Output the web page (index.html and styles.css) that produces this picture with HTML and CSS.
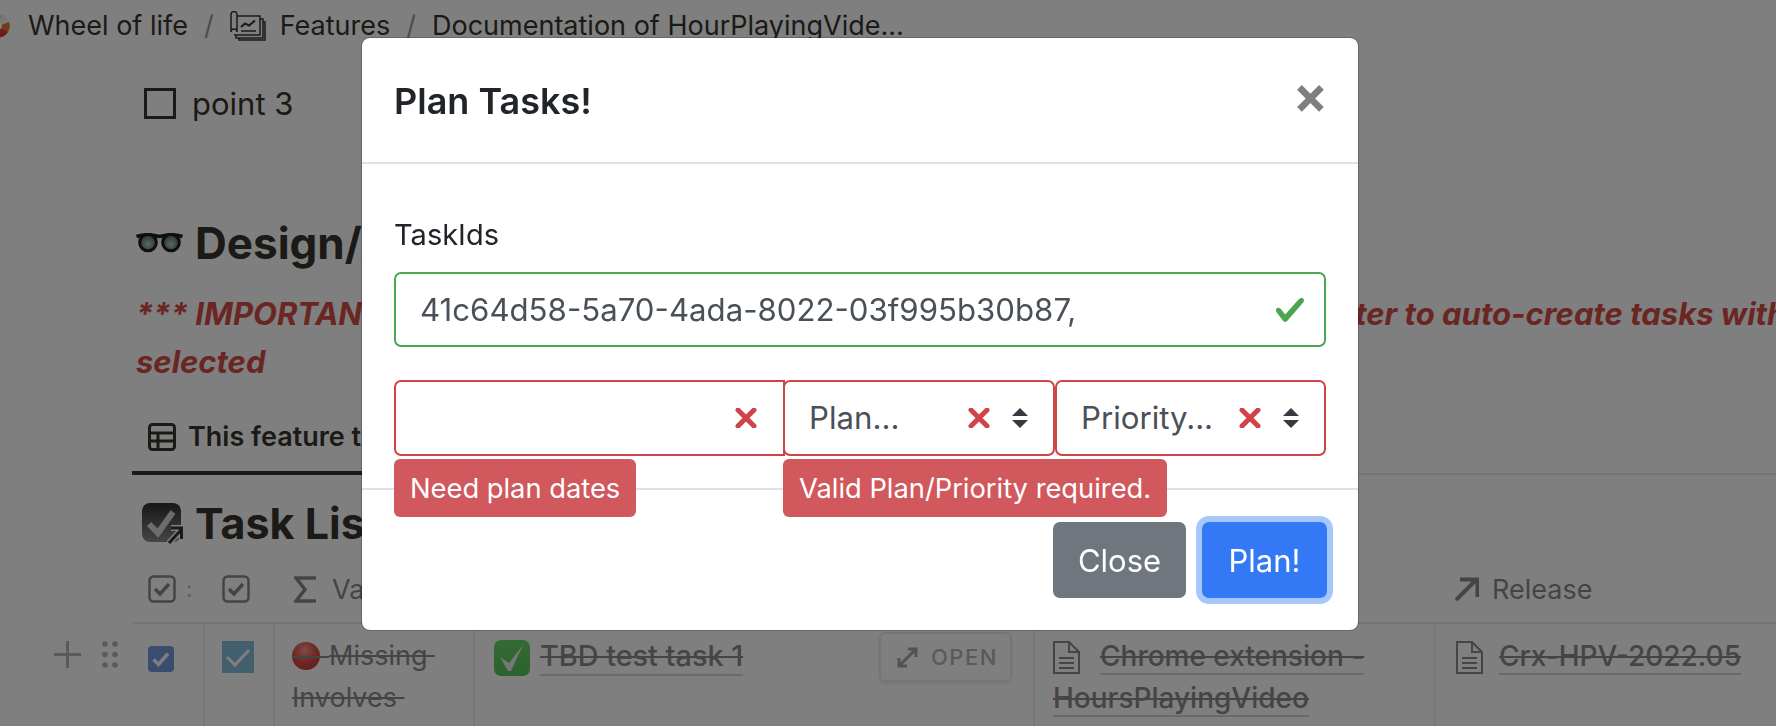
FILE: index.html
```html
<!DOCTYPE html>
<html lang="en">
<head>
<meta charset="utf-8">
<title>Plan Tasks</title>
<link rel="stylesheet" href="styles.css">
</head>
<body>
<div class="page">
  <nav class="crumbs">
    <svg class="logo" viewBox="0 0 24 24"><circle cx="12" cy="12" r="11.500" fill="#d8d8d8"/><path d="M12 12 L23 8 A11.500 11.500 0 0 1 22 18Z" fill="#e8772e"/><path d="M12 12 L22 18 A11.500 11.500 0 0 1 14 23.500Z" fill="#d93a32"/><path d="M12 12 L14 23.500 A11.500 11.500 0 0 1 4 20Z" fill="#3d7cc9"/><path d="M12 12 L23 8 A11.500 11.500 0 0 0 16 1Z" fill="#f1f1f1"/><circle cx="12" cy="12" r="4" fill="#fff"/></svg>
    <span class="crumb">Wheel of life</span>
    <span class="sep">/</span>
    <svg class="feat" viewBox="0 0 36 30" fill="none" stroke="#37352f" stroke-width="1.500"><path d="M1 3.500a3 3 0 0 1 6 0V21a3 3 0 0 0-6 0z"/><path d="M7 5h23v19H4"/><path d="M30 8h3v19H6v-3M33 11h2v18H9v-2"/><path d="M11 16l4-3.500 4 2 6-5" stroke-width="2.200"/><path d="M11 20h15" stroke-width="1.500"/></svg>
    <span class="crumb">Features</span>
    <span class="sep">/</span>
    <span class="crumb">Documentation of HourPlayingVide...</span>
  </nav>

  <div class="todo"><span class="box"></span><span>point 3</span></div>

  <h2 class="heading">
    <svg class="glasses" viewBox="0 0 47 20"><defs><radialGradient id="lens" cx=".5" cy=".6" r=".6"><stop offset="0" stop-color="#b0d0c8"/><stop offset=".7" stop-color="#6a8680"/><stop offset="1" stop-color="#2a3838"/></radialGradient></defs><path d="M0.500 3.500C8 1 16 1.500 23.500 3.500C31 1.500 39 1 46.500 3.500" stroke="#1c1c1c" stroke-width="3.500" fill="none"/><circle cx="12" cy="9.500" r="8.300" fill="url(#lens)" stroke="#1c1c1c" stroke-width="3"/><circle cx="35" cy="9.500" r="8.300" fill="url(#lens)" stroke="#1c1c1c" stroke-width="3"/></svg>
    <span>Design/Architecture</span>
  </h2>

  <div class="note">
    <div class="note-line"><span class="note-left">*** IMPORTANT: after selecting</span><span>filter to auto-create tasks with</span></div>
    <div>selected</div>
  </div>

  <div class="tabs">
    <div class="tab">
      <svg class="tab-icon" viewBox="0 0 28 28" fill="none" stroke="#37352f" stroke-width="3"><rect x="1.500" y="1.500" width="25" height="25" rx="3"/><path d="M1.500 10h25M1.500 18h25M10 10v17"/></svg>
      <span>This feature tasks and more</span>
    </div>
  </div>

  <h2 class="tasklist">
    <svg class="tl-icon" viewBox="0 0 42 41"><defs><linearGradient id="tlg" x1="0" y1="0" x2="0" y2="1"><stop offset="0" stop-color="#2f2f2f"/><stop offset="1" stop-color="#8a8a8a"/></linearGradient></defs><rect width="39" height="39" rx="8" fill="url(#tlg)"/><path d="M7 21l9 9L31 9" fill="none" stroke="#d9d9d9" stroke-width="6"/><path d="M27 40L39 27M29 25h10.500v11" fill="none" stroke="#fff" stroke-width="6"/><path d="M27 40L39 27M29 25h10.500v11" fill="none" stroke="#37352f" stroke-width="3"/></svg>
    <span>Task List for this</span>
  </h2>

  <div class="table">
    <div class="thead">
      <div class="th th-first"><svg class="th-icon" viewBox="0 0 28 28" fill="none" stroke="#8a8985" stroke-width="2.500"><rect x="1.500" y="1.500" width="25" height="25" rx="4"/><path d="M7 14l5 5 9-10" stroke-width="3.500"/></svg><span class="clip">:</span></div>
      <div class="th"><svg class="th-icon" viewBox="0 0 28 28" fill="none" stroke="#8a8985" stroke-width="2.500"><rect x="1.500" y="1.500" width="25" height="25" rx="4"/><path d="M7 14l5 5 9-10" stroke-width="3.500"/></svg></div>
      <div class="th th-val"><svg class="sigma" viewBox="0 0 22 27" fill="none" stroke="#8a8985" stroke-width="3.500"><path d="M22 2H2l9 11.500L2 25h20"/></svg><span>Value</span></div>
      <div class="th"></div>
      <div class="th"></div>
      <div class="th th-rel"><svg class="arrow" viewBox="0 0 24 24" fill="none" stroke="#8a8985" stroke-width="4"><path d="M1 23L22 2M5 2.500h17.500V20"/></svg><span>Release</span></div>
    </div>
    <div class="tr">
      <div class="handles">
        <svg class="plus" viewBox="0 0 27 27" stroke="#b5b4b1" stroke-width="3"><path d="M13.500 0v27M0 13.500h27"/></svg>
        <svg class="dots" viewBox="0 0 16 27" fill="#b5b4b1"><circle cx="3" cy="3" r="2.800"/><circle cx="13" cy="3" r="2.800"/><circle cx="3" cy="13.500" r="2.800"/><circle cx="13" cy="13.500" r="2.800"/><circle cx="3" cy="24" r="2.800"/><circle cx="13" cy="24" r="2.800"/></svg>
      </div>
      <div class="td td-check1"><svg class="cb-blue" viewBox="0 0 26 26"><rect width="26" height="26" rx="4" fill="#7598e0"/><path d="M5.500 13.500l5 5L20 7.500" fill="none" stroke="#fff" stroke-width="3.500"/></svg></div>
      <div class="td td-check2"><svg class="cb-teal" viewBox="0 0 32 32"><rect width="32" height="32" fill="#87bedd"/><path d="M5 16l8 8L27 9" fill="none" stroke="#fff" stroke-width="3"/></svg></div>
      <div class="td td-val"><svg class="red" viewBox="0 0 37 28"><defs><radialGradient id="rd" cx=".45" cy=".3" r=".8"><stop offset="0" stop-color="#f59a95"/><stop offset=".5" stop-color="#e2504a"/><stop offset="1" stop-color="#c43a35"/></radialGradient></defs><circle cx="14" cy="14" r="14" fill="url(#rd)"/><path d="M0 15h37" stroke="#8a8a8a" stroke-width="2"/></svg><span class="strike">Missing&nbsp;</span> <span class="strike">Involves&nbsp;</span></div>
      <div class="td td-name">
        <svg class="green" viewBox="0 0 36 36"><defs><linearGradient id="gr" x1="0" y1="0" x2="0" y2="1"><stop offset="0" stop-color="#6ad468"/><stop offset="1" stop-color="#58c45a"/></linearGradient></defs><rect width="36" height="36" rx="7" fill="url(#gr)"/><path d="M6 17l9 6L29 5 17 31h-3z" fill="#eee"/></svg>
        <span class="link strike">TBD test task 1</span>
        <span class="open"><svg class="open-icon" viewBox="0 0 21 21" fill="none" stroke="#a5a4a0" stroke-width="3"><path d="M2 19L19 2M11 2h8v8M2 11v8h8"/></svg>OPEN</span>
      </div>
      <div class="td td-feat"><svg class="file" viewBox="0 0 27 33" fill="none" stroke="#8a8a8a" stroke-width="2"><path d="M1 1h15l10 10v21H1zM16 1v10h10M6 17h15M6 22h15M6 27h15"/></svg><span class="link strike">Chrome extension - HoursPlayingVideo</span></div>
      <div class="td td-rel"><svg class="file" viewBox="0 0 27 33" fill="none" stroke="#8a8a8a" stroke-width="2"><path d="M1 1h15l10 10v21H1zM16 1v10h10M6 17h15M6 22h15M6 27h15"/></svg><span class="link strike">Crx-HPV-2022.05</span></div>
    </div>
  </div>
</div>

<div class="backdrop">
  <div class="modal">
    <header class="m-head">
      <h5 class="m-title">Plan Tasks!</h5>
      <span class="m-close">×</span>
    </header>
    <div class="m-body">
      <div class="m-label">TaskIds</div>
      <div class="field valid">
        <span class="val-text">41c64d58-5a70-4ada-8022-03f995b30b87,</span>
        <svg class="ok" viewBox="0 0 8 8"><path fill="#4ba64f" d="M2.300 6.730L.6 4.530c-.4-1.040.46-1.400 1.100-.8l1.100 1.400 3.400-3.800c.6-.63 1.600-.27 1.200.7l-4 4.600c-.43.5-.8.4-1.100.1z"/></svg>
      </div>
      <div class="f-row">
        <div class="group g-date">
          <div class="field invalid square-right">
            <svg class="bad" viewBox="0 0 22 20"><path d="M3 2l16 16M19 2L3 18" stroke="#cf4349" stroke-width="5" stroke-linecap="round"/></svg>
          </div>
          <div class="tip">Need plan dates</div>
        </div>
        <div class="group g-plan">
          <div class="field invalid">
            <span class="val-text">Plan...</span>
            <svg class="bad" viewBox="0 0 22 20"><path d="M3 2l16 16M19 2L3 18" stroke="#cf4349" stroke-width="5" stroke-linecap="round"/></svg>
            <svg class="updown" viewBox="0 0 4 5"><path fill="#343a40" d="M2 0L0 2h4zm0 5L0 3h4z"/></svg>
          </div>
          <div class="tip">Valid Plan/Priority required.</div>
        </div>
        <div class="group g-prio">
          <div class="field invalid">
            <span class="val-text">Priority...</span>
            <svg class="bad" viewBox="0 0 22 20"><path d="M3 2l16 16M19 2L3 18" stroke="#cf4349" stroke-width="5" stroke-linecap="round"/></svg>
            <svg class="updown" viewBox="0 0 4 5"><path fill="#343a40" d="M2 0L0 2h4zm0 5L0 3h4z"/></svg>
          </div>
        </div>
      </div>
    </div>
    <footer class="m-foot">
      <button class="btn btn-close">Close</button>
      <button class="btn btn-plan">Plan!</button>
    </footer>
  </div>
</div>
</body>
</html>
```
FILE: styles.css
```css
* { box-sizing: border-box; }
html, body { margin: 0; padding: 0; height: 100%; overflow: hidden; background: #fff; }
body { font-family: Inter, "Noto Sans", sans-serif; color: #37352f; }
svg { display: block; flex: none; }

.page { width: 1776px; height: 726px; overflow: hidden; position: relative; font-size: 25px; }

/* breadcrumb */
.crumbs { height: 51px; display: flex; align-items: center; white-space: nowrap; font-size: 27px; }
.logo { width: 24px; height: 24px; margin-left: -14px; margin-right: 18px; }
.sep { margin: 0 16px; color: #9b9a97; }
.feat { width: 36px; height: 30px; margin-right: 14px; }

.todo { margin: 37px 0 0 144px; height: 31px; display: flex; align-items: center; gap: 16px; font-size: 31px; }
.box { width: 32px; height: 31px; border: 3px solid #37352f; }

.heading, .tasklist { display: flex; align-items: center; margin: 0; font-weight: 700; white-space: nowrap; }
.heading { margin: 100px 0 0 136px; height: 48px; gap: 12px; font-size: 44px; }
.glasses { width: 47px; height: 20px; }

.note { margin: 23px 0 0 136px; font-size: 31px; line-height: 48px; font-weight: 700; font-style: italic; color: #d44c47; white-space: nowrap; }
.note-line { display: flex; }
.note-left { width: 1189px; flex: none; overflow: hidden; }

.tabs { margin: 19px 0 0 132px; height: 70px; border-bottom: 2px solid #e9e9e7; }
.tab { width: 300px; height: 70px; padding: 0 0 3px 16px; display: flex; align-items: center; gap: 12px; font-weight: 600; font-size: 27px; white-space: nowrap; border-bottom: 4px solid #37352f; }
.tab-icon { width: 28px; height: 28px; }

.tasklist { margin: 28px 0 0 142px; height: 40px; gap: 11px; font-size: 43px; }
.tl-icon { width: 42px; height: 41px; }

/* table */
.table { margin: 13px 0 0 132px; position: relative; }
.thead, .tr { display: grid; grid-template-columns: 73px 70px 200px 560px 401px 1fr; }
.thead { height: 68px; border-bottom: 2px solid #e9e9e7; }
.th { display: flex; align-items: center; padding-left: 16px; gap: 13px; color: #8a8985; font-size: 27px; white-space: nowrap; overflow: hidden; }
.th:nth-child(2) { padding-left: 17px; }
.th-first { gap: 10px; }
.clip { color: #bdbcb9; font-size: 22px; }
.th-val { padding-left: 19px; gap: 16px; }
.th-rel { padding-left: 19px; gap: 13px; }
.th-icon { width: 28px; height: 28px; }
.sigma { width: 22px; height: 27px; }
.arrow { width: 24px; height: 24px; }
.tr { position: relative; height: 120px; }
.td { border-right: 2px solid #f0f0ee; padding-top: 11px; font-size: 28px; line-height: 42px; font-weight: 500; position: relative; color: #8a8a8a; }
.td:last-child { border-right: 0; }
.handles { position: absolute; left: -78px; top: 17px; display: flex; gap: 21px; }
.plus { width: 27px; height: 27px; }
.dots { width: 16px; height: 27px; }
.td-check1 { padding: 22px 0 0 16px; }
.cb-blue { width: 26px; height: 26px; }
.td-check2 { padding: 17px 0 0 17px; }
.cb-teal { width: 32px; height: 32px; }
.td-val { padding-left: 17px; font-weight: 400; font-size: 27px; }
.red { display: inline-block; width: 37px; height: 28px; vertical-align: -5px; }
.strike { text-decoration: line-through; text-decoration-thickness: 2px; }
.td-name { display: flex; align-items: flex-start; padding-left: 19px; gap: 10px; }
.green { width: 36px; height: 36px; margin-top: 5px; }
.td-feat { padding-left: 18px; }
.td-rel { padding-left: 20px; }
.file { display: inline-block; width: 27px; height: 33px; vertical-align: -8px; margin-right: 20px; }
.td-rel .file { margin-right: 16px; }
.link { border-bottom: 2px solid #d4d4d4; font-weight: 500; }
.td-name .link { font-size: 28.800px; line-height: 36px; margin-top: 3px; }
.open { position: absolute; right: 21px; top: 8px; height: 50px; width: 133px; padding-left: 16px; display: flex; align-items: center; gap: 13px; border: 2px solid #ecebe9; border-radius: 6px; box-shadow: 0 2px 3px rgba(15, 15, 15, .08); color: #b5b4b1; font-size: 22px; font-weight: 500; letter-spacing: 1.500px; }
.open-icon { width: 21px; height: 21px; }

/* modal overlay */
.backdrop { position: fixed; inset: 0; background: rgba(0, 0, 0, .5); padding: 37px 0 0 361px; }
.modal { width: 998px; height: 594px; background: #fff; border: 1px solid rgba(0, 0, 0, .2); border-radius: 9px; background-clip: padding-box; display: flex; flex-direction: column; color: #212529; }
.m-head { height: 126px; flex: none; display: flex; align-items: center; justify-content: space-between; padding: 2px 30px 0 32px; border-bottom: 2px solid #dee2e6; }
.m-title { margin: 0; font-size: 36px; line-height: 42px; font-weight: 600; }
.m-close { font-size: 52px; line-height: 40px; font-weight: 700; color: #7f7f7f; margin-bottom: 12px; }
.m-body { padding: 50px 32px 32px 32px; flex: none; }
.m-label { font-size: 29px; line-height: 42px; margin-bottom: 16px; }
.field { display: flex; align-items: center; height: 75px; border: 2px solid; border-radius: 7px; padding: 0 16px 0 24px; background: #fff; }
.valid { border-color: #4ba64f; }
.invalid { border-color: #cf4349; justify-content: flex-end; height: 76px; padding-right: 25px; }
.val-text { font-size: 31.200px; color: #495057; white-space: nowrap; margin-right: auto; }
.ok { width: 32px; height: 32px; margin-right: 2px; }
.f-row { margin-top: 33px; display: flex; position: relative; }
.group { position: relative; }
.g-date { width: 391px; margin-right: -2px; }
.g-plan { width: 272px; }
.g-prio { width: 271px; }
.square-right { border-radius: 7px 0 0 7px; padding-right: 26px; }
.bad { width: 22px; height: 20px; }
.g-plan .bad, .g-prio .bad { margin-right: 22px; }
.updown { width: 16px; height: 20px; }
.tip { position: absolute; left: 0; top: calc(100% + 3px); height: 58px; padding: 0 16px; display: flex; align-items: center; background: #d1585d; color: #fff; font-size: 27.300px; border-radius: 6px; white-space: nowrap; z-index: 2; }
.m-foot { border-top: 2px solid #dee2e6; padding: 32px 31px 32px 0; display: flex; justify-content: flex-end; gap: 16px; height: 142px; flex: none; }
.btn { height: 76px; border: 0; border-radius: 7px; color: #fff; font-family: inherit; font-size: 31px; padding: 0; }
.btn-close { width: 133px; background: #6f767e; }
.btn-plan { width: 125px; background: #3379f6; box-shadow: 0 0 0 6px #a5c7fb; }
```
